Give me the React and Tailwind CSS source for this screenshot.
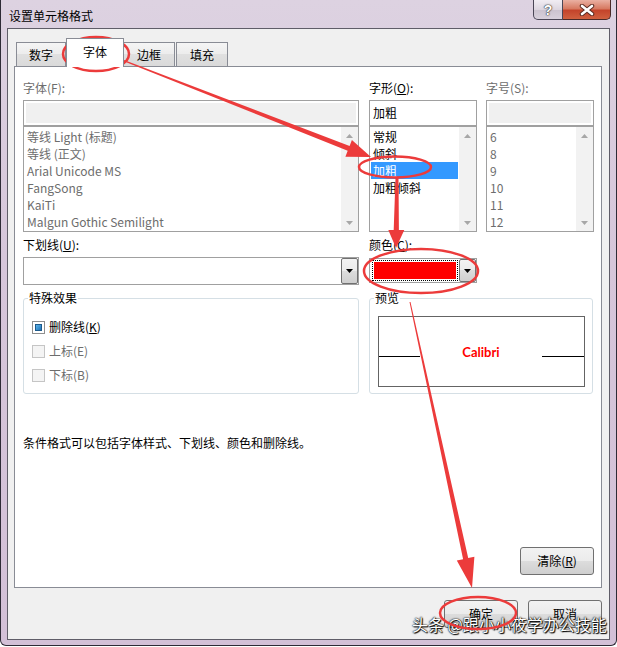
import React from 'react';

const RED = '#ec3b3b';

function arrowPoly(x1, y1, x2, y2, w1, w2, hl, hw) {
  const dx = x2 - x1, dy = y2 - y1, L = Math.hypot(dx, dy);
  const ux = dx / L, uy = dy / L, nx = -uy, ny = ux;
  const bx = x2 - ux * hl, by = y2 - uy * hl;
  const p = [
    [x1 + nx * w1, y1 + ny * w1],
    [bx + nx * w2, by + ny * w2],
    [bx + nx * hw, by + ny * hw],
    [x2, y2],
    [bx - nx * hw, by - ny * hw],
    [bx - nx * w2, by - ny * w2],
    [x1 - nx * w1, y1 - ny * w1],
  ];
  return p.map((q) => q.map((v) => v.toFixed(1)).join(',')).join(' ');
}

function Tri({ dir = 'down', color = '#000' }) {
  return (
    <svg width="7" height="4" viewBox="0 0 7 4">
      {dir === 'down' ? (
        <polygon points="0,0 7,0 3.5,4" fill={color} />
      ) : (
        <polygon points="0,4 7,4 3.5,0" fill={color} />
      )}
    </svg>
  );
}

function VScroll() {
  return (
    <div className="w-[17px] h-full flex flex-col bg-[#f2f2f2]">
      <div className="h-[17px] flex items-center justify-center">
        <Tri dir="up" color="#a7a7a7" />
      </div>
      <div className="flex-1" />
      <div className="h-[17px] flex items-center justify-center">
        <Tri dir="down" color="#a7a7a7" />
      </div>
    </div>
  );
}

function ListBox({ items, selected = -1, gray = false }) {
  return (
    <div className="h-[106px] border border-[#a0a0a0] bg-white flex">
      <div className="flex-1 pt-[1px] px-[1px] overflow-hidden">
        {items.map((t, i) => (
          <div
            key={i}
            className={
              'h-[17px] leading-[17px] pl-[2px] whitespace-nowrap ' +
              (i === selected ? 'bg-[#3399ff] text-white' : gray ? 'text-[#6d6d6d]' : 'text-black')
            }
          >
            {t}
          </div>
        ))}
      </div>
      <VScroll />
    </div>
  );
}

function DropBtn() {
  return (
    <div className="w-[17px] h-full border border-[#707070] rounded-[2px] bg-[linear-gradient(#f2f2f2_0%,#ebebeb_50%,#dddddd_50%,#cfcfcf_100%)] flex items-center justify-center">
      <Tri dir="down" color="#000" />
    </div>
  );
}

function Button({ children, className = '' }) {
  return (
    <div
      className={
        'w-[74px] h-[28px] border border-[#707070] rounded-[3px] bg-[linear-gradient(#f2f2f2_0%,#ebebeb_50%,#dddddd_50%,#cfcfcf_100%)] flex items-center justify-center text-black ' +
        className
      }
    >
      {children}
    </div>
  );
}

function CheckRow({ checked, disabled, children }) {
  return (
    <div className="h-[24px] flex items-center">
      {checked ? (
        <div className="w-[13px] h-[13px] border border-[#8f8f8f] bg-white p-[2px]">
          <div className="w-full h-full border border-[#1d5a8c] bg-[linear-gradient(135deg,#5db3e8,#1f74b8)]" />
        </div>
      ) : (
        <div className="w-[13px] h-[13px] border border-[#c5c5c5] bg-[#f4f4f4]" />
      )}
      <span className={'ml-[4px] leading-[16px] ' + (disabled ? 'text-[#6d6d6d]' : 'text-black')}>{children}</span>
    </div>
  );
}

export default function App() {
  const fonts = ['等线 Light (标题)', '等线 (正文)', 'Arial Unicode MS', 'FangSong', 'KaiTi', 'Malgun Gothic Semilight'];
  const styles = ['常规', '倾斜', '加粗', '加粗倾斜'];
  const sizes = ['6', '8', '9', '10', '11', '12'];

  return (
    <div className="relative w-[617px] h-[647px] bg-white overflow-hidden [font-family:'Noto_Sans_CJK_SC','Noto_Sans',sans-serif] text-[12px] text-black">
      <div className="w-[617px] h-[646px] rounded-b-[6px] border border-t-0 border-[#2e2b36] bg-[linear-gradient(180deg,#ddd2e1_0%,#d6c6da_40%,#d3c0d7_100%)] flex flex-col">
        {/* title bar */}
        <div className="h-[28px] flex items-start">
          <div className="pl-[8px] pt-[8px] leading-[16px]">设置单元格格式</div>
          <div className="ml-auto mr-[5px] flex">
            <div className="w-[30px] h-[20px] border border-t-0 border-[#4a4656] rounded-bl-[5px] bg-[linear-gradient(#f1edf3_0%,#ddd6e0_50%,#cbc2cf_51%,#d8d0dc_100%)] flex items-center justify-center">
              <span className="[font-family:'Liberation_Sans',sans-serif] font-bold text-[14px] leading-[14px] text-white [text-shadow:0_0_1px_#333,0_0_1px_#333,0_0_2px_#555]">?</span>
            </div>
            <div className="w-[48px] h-[20px] border border-t-0 border-l-0 border-[#4a2a28] rounded-br-[5px] bg-[linear-gradient(#eab0a2_0%,#d77a62_45%,#c4442b_55%,#d0603f_100%)] flex items-center justify-center">
              <svg width="16" height="12" viewBox="0 0 16 12">
                <path d="M3 2 L13 10 M13 2 L3 10" stroke="#5a2a20" strokeWidth="4.5" strokeLinecap="round" />
                <path d="M3 2 L13 10 M13 2 L3 10" stroke="#ffffff" strokeWidth="2.6" strokeLinecap="round" />
              </svg>
            </div>
          </div>
        </div>

        {/* client area */}
        <div className="ml-[6px] mr-[6px] h-[612px] border border-[#5f5d68] bg-[#f0f0f0] flex flex-col pt-[9px]">
          {/* tabs */}
          <div className="ml-[8px] h-[28px] flex items-end">
            <div className="w-[50px] h-[24px] border border-b-0 border-[#898c95] bg-[linear-gradient(#f5f5f5_0%,#ececec_50%,#e0e0e0_50%,#dadada_100%)] flex items-center justify-center">数字</div>
            <div className="relative z-10 w-[58px] h-[29px] -mb-px border border-b-0 border-[#898c95] bg-white flex items-center justify-center pb-[2px]">字体</div>
            <div className="w-[51px] h-[24px] border border-b-0 border-l-0 border-[#898c95] bg-[linear-gradient(#f5f5f5_0%,#ececec_50%,#e0e0e0_50%,#dadada_100%)] flex items-center justify-center">边框</div>
            <div className="ml-[1px] w-[52px] h-[24px] border border-b-0 border-[#898c95] bg-[linear-gradient(#f5f5f5_0%,#ececec_50%,#e0e0e0_50%,#dadada_100%)] flex items-center justify-center">填充</div>
          </div>

          {/* panel */}
          <div className="ml-[6px] w-[588px] h-[522px] border border-[#898c95] bg-white pt-[13px] pl-[8px] flex flex-col">
            {/* row 1 */}
            <div className="flex">
              <div className="w-[336px]">
                <div className="leading-[16px] text-[#6d6d6d]">字体(F):</div>
                <div className="mt-[4px] h-[26px] border border-[#a0a0a0] bg-white p-[2px]">
                  <div className="w-full h-full bg-[#f0f0f0]" />
                </div>
                <ListBox items={fonts} gray />
              </div>
              <div className="ml-[10px] w-[108px]">
                <div className="leading-[16px]">
                  字形(<span className="underline">O</span>):
                </div>
                <div className="mt-[4px] h-[26px] border border-[#a0a0a0] bg-white pl-[3px] flex items-center">加粗</div>
                <ListBox items={styles} selected={2} />
              </div>
              <div className="ml-[9px] w-[108px]">
                <div className="leading-[16px] text-[#6d6d6d]">字号(S):</div>
                <div className="mt-[4px] h-[26px] border border-[#a0a0a0] bg-white p-[2px]">
                  <div className="w-full h-full bg-[#f0f0f0]" />
                </div>
                <ListBox items={sizes} gray />
              </div>
            </div>

            {/* row 2 */}
            <div className="mt-[5px] flex">
              <div className="w-[336px]">
                <div className="leading-[16px]">
                  下划线(<span className="underline">U</span>):
                </div>
                <div className="mt-[4px] h-[28px] border border-[#a0a0a0] bg-white flex justify-end">
                  <DropBtn />
                </div>
              </div>
              <div className="ml-[10px] w-[108px]">
                <div className="leading-[16px]">
                  颜色(<span className="underline">C</span>):
                </div>
                <div className="mt-[5px] h-[25px] border border-[#a0a0a0] bg-white flex">
                  <div className="flex-1 pl-[2px] pr-[1px] py-[1px]">
                    <div className="h-full border border-dotted border-black p-[1px]">
                      <div className="h-full bg-[#ff0000]" />
                    </div>
                  </div>
                  <DropBtn />
                </div>
              </div>
            </div>

            {/* row 3: group boxes */}
            <div className="mt-[5px] flex">
              <fieldset className="w-[336px] h-[104px] border border-[#d5dfe5] rounded-[3px]">
                <legend className="ml-[4px] px-[1px] leading-[16px]">特殊效果</legend>
                <div className="pt-[9px] pl-[8px] flex flex-col">
                  <CheckRow checked>
                    删除线(<span className="underline">K</span>)
                  </CheckRow>
                  <CheckRow disabled>上标(E)</CheckRow>
                  <CheckRow disabled>下标(B)</CheckRow>
                </div>
              </fieldset>
              <fieldset className="ml-[10px] w-[224px] h-[104px] border border-[#d5dfe5] rounded-[3px]">
                <legend className="ml-[4px] px-[1px] leading-[16px]">预览</legend>
                <div className="mt-[10px] ml-[8px] w-[207px] h-[71px] border border-[#646464] flex items-center">
                  <div className="w-[41px] h-px bg-black mt-[10px]" />
                  <div className="flex-1 text-center [font-family:'Lato','Liberation_Sans',sans-serif] font-bold text-[13px] leading-[16px] text-[#ff0000]">Calibri</div>
                  <div className="w-[42px] h-px bg-black mt-[10px]" />
                </div>
              </fieldset>
            </div>

            {/* note */}
            <div className="mt-[41px] leading-[16px]">条件格式可以包括字体样式、下划线、颜色和删除线。</div>

            {/* clear button */}
            <div className="mt-[96px] self-end mr-[7px]">
              <Button>
                清除(<span className="underline">R</span>)
              </Button>
            </div>
          </div>

          {/* bottom buttons */}
          <div className="mt-[12px] flex justify-end mr-[7px] gap-[10px]">
            <Button>确定</Button>
            <Button>取消</Button>
          </div>
        </div>
      </div>

      {/* watermark */}
      <div className="absolute left-[412px] top-[614px] text-[16px] leading-[20px] text-white whitespace-nowrap [text-shadow:0_0_2px_#000,1px_1px_1px_#000,0_0_1px_#000]">
        头条 @跟小小筱学办公技能
      </div>

      {/* annotations */}
      <svg className="absolute inset-0 pointer-events-none" width="617" height="647" viewBox="0 0 617 647">
        <ellipse cx="96" cy="54" rx="33" ry="17" fill="none" stroke={RED} strokeWidth="2.5" />
        <polygon points={arrowPoly(112, 56, 371, 157, 0.6, 2.6, 24, 9)} fill={RED} />
        <ellipse cx="395" cy="167" rx="36" ry="10.5" fill="none" stroke={RED} strokeWidth="2.5" />
        <polygon points={arrowPoly(397, 178, 396, 248, 1.5, 2.6, 18, 8)} fill={RED} />
        <ellipse cx="421" cy="271" rx="57" ry="22" fill="none" stroke={RED} strokeWidth="2.5" />
        <polygon points={arrowPoly(410, 302, 472, 588, 0.5, 2.6, 30, 9)} fill={RED} />
        <ellipse cx="478" cy="613" rx="38" ry="16" fill="none" stroke={RED} strokeWidth="2.5" />
      </svg>
    </div>
  );
}
